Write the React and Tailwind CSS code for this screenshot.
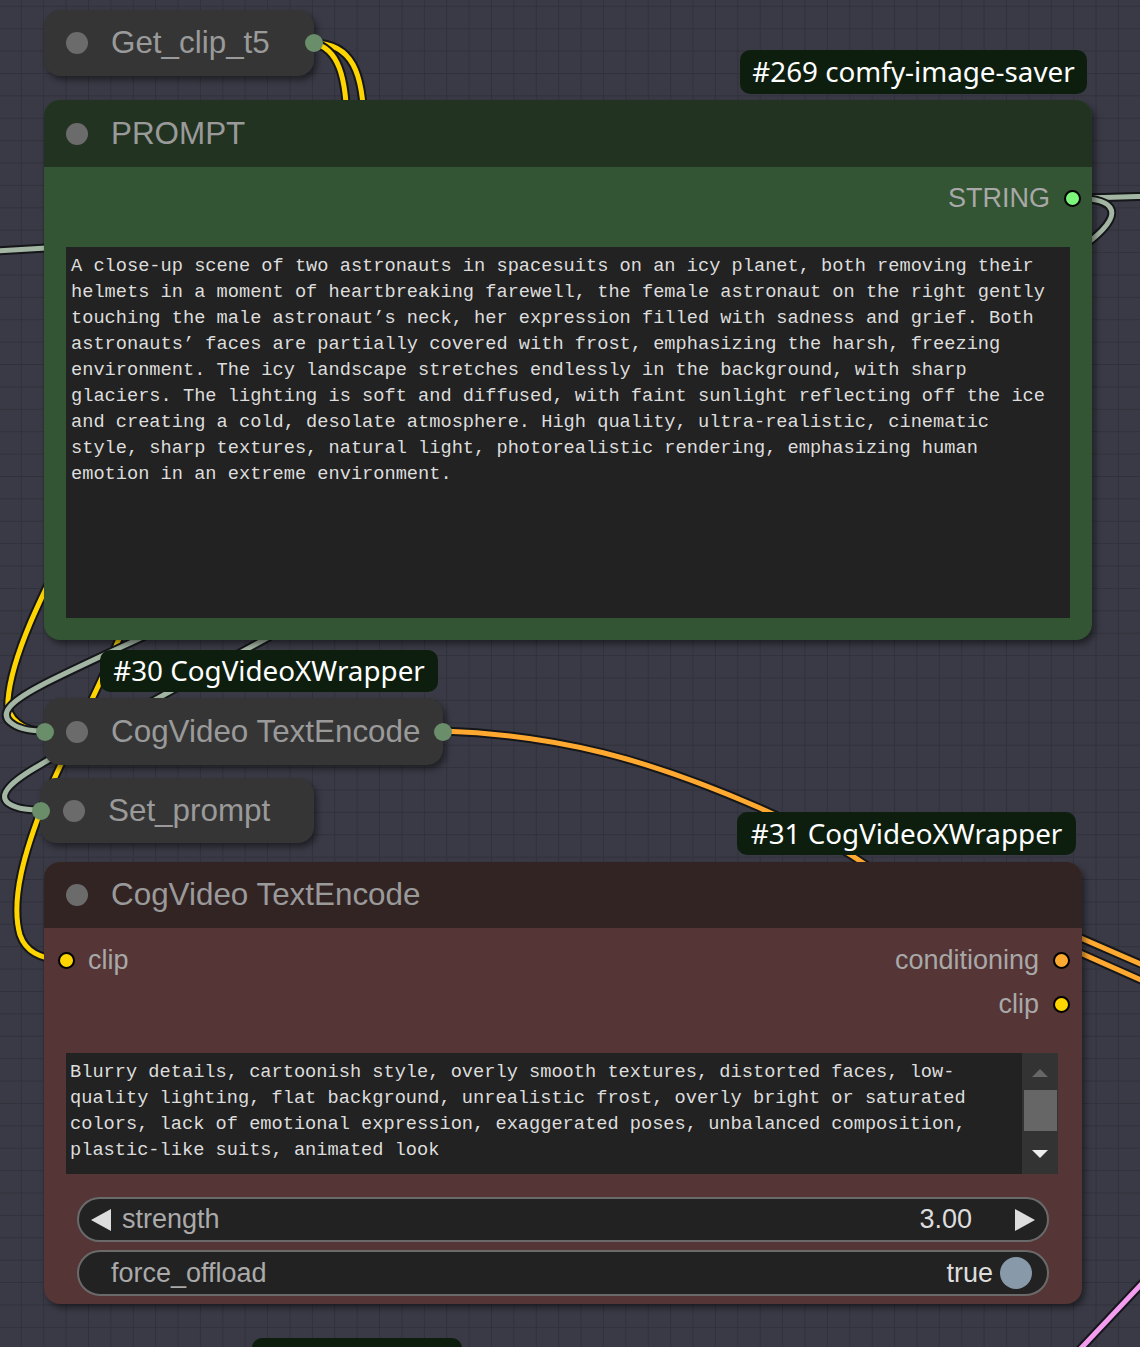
const title = "font-['Liberation_Sans',Arial,sans-serif]"
const mono = "font-['Liberation_Mono','Courier_New',monospace]"
const badge = "font-['Noto_Sans','Open_Sans',sans-serif]"

const promptLines = [
  'A close-up scene of two astronauts in spacesuits on an icy planet, both removing their',
  'helmets in a moment of heartbreaking farewell, the female astronaut on the right gently',
  'touching the male astronaut’s neck, her expression filled with sadness and grief. Both',
  'astronauts’ faces are partially covered with frost, emphasizing the harsh, freezing',
  'environment. The icy landscape stretches endlessly in the background, with sharp',
  'glaciers. The lighting is soft and diffused, with faint sunlight reflecting off the ice',
  'and creating a cold, desolate atmosphere. High quality, ultra-realistic, cinematic',
  'style, sharp textures, natural light, photorealistic rendering, emphasizing human',
  'emotion in an extreme environment.',
]

const negativeLines = [
  'Blurry details, cartoonish style, overly smooth textures, distorted faces, low-',
  'quality lighting, flat background, unrealistic frost, overly bright or saturated',
  'colors, lack of emotional expression, exaggerated poses, unbalanced composition,',
  'plastic-like suits, animated look',
]

// links sit under the nodes
const wires = [
  { d: 'M313,43 C352,43 364,72 364,130', c: '#ffd500' },
  { d: 'M313,43 C338,48 347,76 347,130', c: '#ffd500' },
  { d: 'M80,520 C50,580 12,650 8,700 C6,720 25,731 43,731', c: '#ffd500' },
  { d: 'M130,610 C105,680 70,740 45,800 C25,850 10,900 20,935 C26,952 40,958 60,960', c: '#ffd500' },
  { d: 'M220,600 C150,635 80,665 40,686 C10,702 0,713 10,722 C18,729 30,731 43,731', c: '#a3b5a3' },
  { d: 'M300,620 C200,675 90,735 40,765 C10,782 -2,795 8,803 C16,809 28,810 40,810', c: '#a3b5a3' },
  { d: 'M-5,251 L80,246', c: '#a3b5a3' },
  { d: 'M1072,198 C1110,198 1125,197 1150,196', c: '#a3b5a3' },
  { d: 'M1072,198 C1120,198 1125,215 1085,245', c: '#a3b5a3' },
  { d: 'M443,731 C560,735 650,760 760,808 C800,826 840,845 880,875', c: '#ffa931' },
  { d: 'M1060,929 L1150,968', c: '#ffa931' },
  { d: 'M1060,944 L1150,984', c: '#ffa931' },
  { d: 'M1070,1360 L1150,1275', c: '#f49cf0' },
]

const Wires = () => (
  <svg className="absolute inset-0" width="1140" height="1347">
    {wires.map((w, i) => (
      <g key={i} fill="none" strokeLinecap="round">
        <path d={w.d} stroke="#15161a" strokeWidth="9" />
        <path d={w.d} stroke={w.c} strokeWidth="5" />
      </g>
    ))}
  </svg>
)

const Badge = ({ text, className }) => (
  <div className={`absolute ${className} bg-[#0e1e0e] rounded-[10px] flex items-center justify-center text-white text-[27.8px] ${badge}`}>
    {text}
  </div>
)

const Collapsed = ({ text, className, inDot, outDot, dotX = 'pl-[22px]' }) => (
  <div className={`absolute ${className} bg-[#353535] rounded-[16px] shadow-[3px_4px_6px_rgba(0,0,0,0.45)] flex items-center ${dotX} gap-[23px]`}>
    <span className="w-[22px] h-[22px] rounded-full bg-[#6b6b6b]" />
    <span className={`${title} text-[31.4px] text-[#9a9a9a] leading-none`}>{text}</span>
    {inDot && <span className="absolute left-[-8px] top-1/2 -translate-y-1/2 w-[18px] h-[18px] rounded-full bg-[#6a8e6a]" />}
    {outDot && <span className="absolute right-[-9px] top-1/2 -translate-y-1/2 w-[18px] h-[18px] rounded-full bg-[#6a8e6a]" />}
  </div>
)

const Slot = ({ color }) => (
  <span className="w-[17px] h-[17px] rounded-full border-2 border-black" style={{ background: color }} />
)

export default function App() {
  return (
    <div className="relative w-[1140px] h-[1347px] overflow-hidden bg-[#393a45] bg-[linear-gradient(to_right,#30313b_1px,transparent_1px),linear-gradient(to_bottom,#30313b_1px,transparent_1px)] bg-[size:22.4px_22.4px] bg-[position:20.8px_5.8px]">
      <Wires />

      <Collapsed text="Get_clip_t5" className="left-[44px] top-[10px] w-[270px] h-[66px]" outDot />

      <Badge text="#269 comfy-image-saver" className="left-[740px] top-[50px] w-[347px] h-[44px]" />

      {/* PROMPT */}
      <div className="absolute left-[44px] top-[100px] w-[1048px] h-[540px] rounded-[16px] overflow-hidden bg-[#335533] shadow-[3px_4px_6px_rgba(0,0,0,0.45)] flex flex-col">
        <div className="h-[67px] bg-[#223322] flex items-center pl-[22px] gap-[23px]">
          <span className="w-[22px] h-[22px] rounded-full bg-[#6b6b6b]" />
          <span className={`${title} text-[31.4px] text-[#9a9a9a] leading-none`}>PROMPT</span>
        </div>
        <div className="h-[62px] flex items-center justify-end gap-[14px] pr-[11px]">
          <span className={`${title} text-[27px] text-[#a8a8a8]`}>STRING</span>
          <Slot color="#7cf77c" />
        </div>
        <div className={`mx-[22px] mt-[18px] h-[371px] bg-[#222222] px-[5px] pt-[6px] ${mono} text-[18.67px] leading-[26px] text-[#dddddd] whitespace-pre`}>
          {promptLines.map((l, i) => <div key={i}>{l}</div>)}
        </div>
      </div>

      <Badge text="#30 CogVideoXWrapper" className="left-[100px] top-[650px] w-[338px] h-[42px]" />

      <Collapsed text="CogVideo TextEncode" className="left-[44px] top-[698px] w-[399px] h-[67px]" inDot outDot />
      <Collapsed text="Set_prompt" className="left-[40px] top-[778px] w-[274px] h-[65px]" inDot dotX="pl-[23px]" />

      <Badge text="#31 CogVideoXWrapper" className="left-[737px] top-[812px] w-[339px] h-[43px]" />

      {/* negative text encode */}
      <div className="absolute left-[44px] top-[862px] w-[1038px] h-[442px] rounded-[16px] overflow-hidden bg-[#553535] shadow-[3px_4px_6px_rgba(0,0,0,0.45)] flex flex-col">
        <div className="h-[66px] shrink-0 bg-[#332424] flex items-center pl-[22px] gap-[23px]">
          <span className="w-[22px] h-[22px] rounded-full bg-[#6b6b6b]" />
          <span className={`${title} text-[31.4px] text-[#9a9a9a] leading-none`}>CogVideo TextEncode</span>
        </div>
        <div className="pt-[10px] h-[54px] flex items-center justify-between pl-[14px] pr-[12px]">
          <div className="flex items-center gap-[13px]">
            <Slot color="#ffd500" />
            <span className={`${title} text-[27px] text-[#a8a8a8]`}>clip</span>
          </div>
          <div className="flex items-center gap-[14px]">
            <span className={`${title} text-[27px] text-[#a8a8a8]`}>conditioning</span>
            <Slot color="#ffa931" />
          </div>
        </div>
        <div className="h-[44px] flex items-center justify-end gap-[14px] pr-[12px]">
          <span className={`${title} text-[27px] text-[#a8a8a8]`}>clip</span>
          <Slot color="#ffd500" />
        </div>
        <div className="mt-[27px] ml-[22px] mr-[24px] h-[121px] shrink-0 bg-[#222222] flex">
          <div className={`flex-1 px-[4px] pt-[6px] ${mono} text-[18.67px] leading-[26px] text-[#dddddd] whitespace-pre`}>
            {negativeLines.map((l, i) => <div key={i}>{l}</div>)}
          </div>
          <div className="w-[36px] bg-[#333333] flex flex-col items-center">
            <svg width="18" height="12" viewBox="0 0 18 12" className="mt-[14px] shrink-0"><polygon points="9,2 17,10 1,10" fill="#666" /></svg>
            <div className="mt-[11px] w-[33px] h-[41px] shrink-0 bg-[#666666]" />
            <svg width="18" height="12" viewBox="0 0 18 12" className="mt-[17px] shrink-0"><polygon points="1,2 17,2 9,10" fill="#eee" /></svg>
          </div>
        </div>
        <div className="mt-[23px] mx-[33px] h-[45px] shrink-0 rounded-full border-2 border-[#6a6a6a] bg-[#222222] flex items-center pl-[11px] pr-[11px]">
          <svg width="22" height="24" viewBox="0 0 22 24"><polygon points="1,12 21,1 21,23" fill="#dddddd" /></svg>
          <span className={`${title} text-[27px] text-[#aaaaaa] ml-[10px]`}>strength</span>
          <span className={`${title} text-[27px] text-[#dddddd] ml-auto mr-[42px]`}>3.00</span>
          <svg width="22" height="24" viewBox="0 0 22 24"><polygon points="1,1 21,12 1,23" fill="#dddddd" /></svg>
        </div>
        <div className="mt-[8px] mx-[33px] h-[46px] shrink-0 rounded-full border-2 border-[#6a6a6a] bg-[#222222] flex items-center pl-[32px] pr-[15px]">
          <span className={`${title} text-[27px] text-[#aaaaaa]`}>force_offload</span>
          <span className={`${title} text-[27px] text-[#dddddd] ml-auto mr-[7px]`}>true</span>
          <span className="w-[32px] h-[32px] rounded-full bg-[#8899aa]" />
        </div>
      </div>

      <div className="absolute left-[252px] top-[1338px] w-[210px] h-[40px] rounded-[10px] bg-[#0e1e0e]" />
    </div>
  )
}
